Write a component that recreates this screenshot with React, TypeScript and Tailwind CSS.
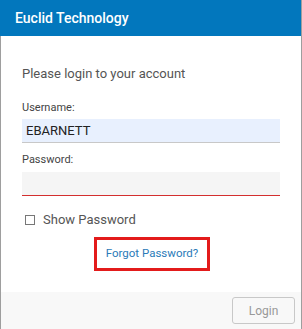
export default function App() {
  return (
    <div
      className="w-[302px] h-[329px] flex flex-col bg-white text-[#555]"
      style={{ fontFamily: 'Roboto, "Liberation Sans", sans-serif' }}
    >
      <header className="h-9 bg-[#0277bd] flex items-center px-[15px] border-r border-[#9e9e9e]">
        <span className="text-white text-[14px] font-medium">Euclid Technology</span>
      </header>

      <div className="flex-1 flex flex-col border-x border-[#9e9e9e]">
        <main className="flex-1 px-[21px] pt-[30px]">
          <p className="text-[13px] leading-[16px] text-[#555]">Please login to your account</p>

          <label className="block mt-[19px] text-[11px] leading-[13px] text-[#444]">Username:</label>
          <div className="mt-[5px] h-[24px] bg-[#e8f0fe] border-b border-[#c8c8c8] flex items-center px-[4px]">
            <span className="text-[13px] text-[#222]">EBARNETT</span>
          </div>

          <label className="block mt-[10px] text-[11px] leading-[13px] text-[#444]">Password:</label>
          <div className="mt-[6px] h-[24px] bg-[#f5f5f5] border-b border-[#d32f2f]" />

          <div className="mt-[16px] flex items-center gap-[8px] pl-[3px]">
            <span className="w-[10px] h-[10px] border border-[#777] bg-white" />
            <span className="text-[13px] leading-[16px] text-[#555]">Show Password</span>
          </div>

          <div className="mt-[9px] flex justify-center">
            <div className="w-[116px] h-[34px] border-[3px] border-[#e31b1b] flex items-center justify-center ml-[2px]">
              <span className="text-[11.5px] text-[#2a7ab8]">Forgot Password?</span>
            </div>
          </div>
        </main>

        <footer className="h-[37px] bg-[#f8f8f8] flex items-center justify-end pr-[6px]">
          <button className="w-[63px] h-[27px] border border-[#c8c8c8] rounded-[3px] text-[12px] text-[#999] bg-[#f8f8f8]">
            Login
          </button>
        </footer>
      </div>
    </div>
  );
}
